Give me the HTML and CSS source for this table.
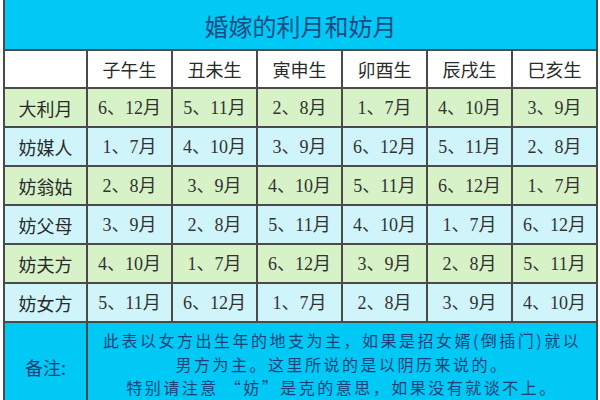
FILE: index.html
```html
<!DOCTYPE html>
<html lang="zh">
<head>
<meta charset="utf-8">
<link rel="stylesheet" href="styles.css">
</head>
<body>
<table class="chart">
  <colgroup>
    <col class="c-label">
    <col class="c-data"><col class="c-data"><col class="c-data">
    <col class="c-data"><col class="c-data"><col class="c-data">
  </colgroup>
  <tr class="title-row"><td colspan="7" class="title">婚嫁的利月和妨月</td></tr>
  <tr class="head-row">
    <td></td><td>子午生</td><td>丑未生</td><td>寅申生</td><td>卯酉生</td><td>辰戌生</td><td>巳亥生</td>
  </tr>
  <tr class="row green">
    <td class="label">大利月</td><td>6、12月</td><td>5、11月</td><td>2、8月</td><td>1、7月</td><td>4、10月</td><td>3、9月</td>
  </tr>
  <tr class="row blue">
    <td class="label">妨媒人</td><td>1、7月</td><td>4、10月</td><td>3、9月</td><td>6、12月</td><td>5、11月</td><td>2、8月</td>
  </tr>
  <tr class="row green">
    <td class="label">妨翁姑</td><td>2、8月</td><td>3、9月</td><td>4、10月</td><td>5、11月</td><td>6、12月</td><td>1、7月</td>
  </tr>
  <tr class="row blue">
    <td class="label">妨父母</td><td>3、9月</td><td>2、8月</td><td>5、11月</td><td>4、10月</td><td>1、7月</td><td>6、12月</td>
  </tr>
  <tr class="row green">
    <td class="label">妨夫方</td><td>4、10月</td><td>1、7月</td><td>6、12月</td><td>3、9月</td><td>2、8月</td><td>5、11月</td>
  </tr>
  <tr class="row blue">
    <td class="label">妨女方</td><td>5、11月</td><td>6、12月</td><td>1、7月</td><td>2、8月</td><td>3、9月</td><td>4、10月</td>
  </tr>
  <tr class="note-row">
    <td class="note-label">备注:</td>
    <td colspan="6" class="note">
      <div class="note-line">此表以女方出生年的地支为主，如果是招女婿(倒插门)就以</div>
      <div class="note-line">男方为主。这里所说的是以阴历来说的。</div>
      <div class="note-line">特别请注意 “妨”是克的意思，如果没有就谈不上。</div>
    </td>
  </tr>
</table>
</body>
</html>
```

FILE: styles.css
```css
html, body {
  margin: 0;
  padding: 0;
  background: #ffffff;
}

.chart {
  margin-left: 3px;
  width: 594px;
  table-layout: fixed;
  border-collapse: collapse;
  font-family: "Liberation Serif", "Noto Sans CJK SC", serif;
  font-size: 18px;
  color: #333333;
}

.c-label { width: 83px; }
.c-data { width: 85px; }

.chart td {
  border: 2px solid #4a4a4a;
  padding: 0;
  text-align: center;
  vertical-align: middle;
  white-space: nowrap;
  line-height: 20px;
}

.title-row { height: 50px; }

.chart td.title {
  border-top: 0;
  background: #00c9f5;
  color: #1a4a82;
  font-family: "Noto Sans CJK SC", sans-serif;
  font-size: 24px;
  padding-top: 2px;
}

.head-row { height: 38px; }

.head-row td {
  background: #ffffff;
  font-family: "Noto Sans CJK SC", sans-serif;
  color: #2a2a2a;
}

.row { height: 39px; }

.row.green td { background: #d6f2c6; }
.row.blue td { background: #cff5fb; }

.chart td.label {
  font-family: "Noto Sans CJK SC", sans-serif;
  color: #2a2a2a;
}

.note-row { height: 96px; }

.note-row td {
  background: #00c9f5;
  color: #1f3f78;
  font-family: "Noto Sans CJK SC", sans-serif;
}

.chart td.note-label {
  vertical-align: top;
  padding-top: 34px;
}

.chart td.note {
  vertical-align: top;
  padding-top: 6px;
  padding-bottom: 8px;
}

.note-line {
  line-height: 23.5px;
  font-size: 16px;
  letter-spacing: 2.5px;
}
```
